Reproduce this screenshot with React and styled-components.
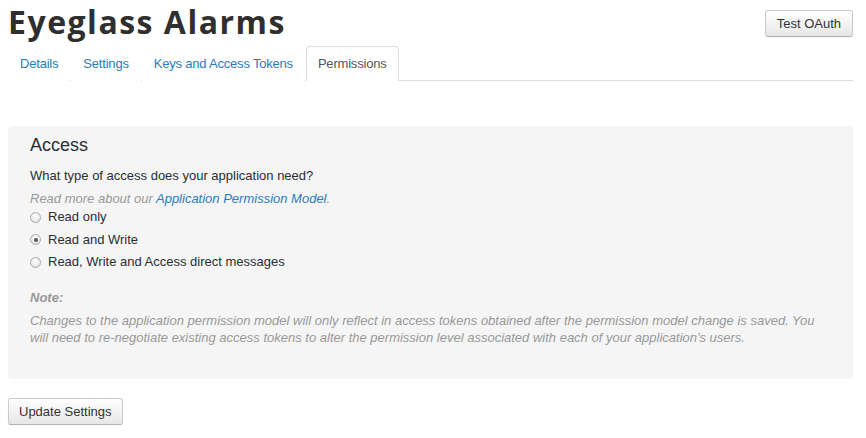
import React from "react";
import styled, { createGlobalStyle } from "styled-components";

const Global = createGlobalStyle`
  html, body { margin: 0; padding: 0; background: #fff; }
  body { font-family: "Liberation Sans", Arial, sans-serif; font-size: 13px; color: #292f33; }
  * { box-sizing: border-box; }
`;

const Page = styled.div`
  padding: 0 13px 0 8px;
`;

const Header = styled.div`
  display: flex;
  justify-content: space-between;
  align-items: flex-start;
  height: 46px;
`;

const Title = styled.h1`
  margin: 0;
  font-family: "Open Sans", Lato, sans-serif;
  font-weight: 700;
  font-size: 32px;
  line-height: 44px;
  color: #2f2f2f;
  letter-spacing: 1.5px;
`;

const Button = styled.button`
  font-family: "Liberation Sans", Arial, sans-serif;
  font-size: 13px;
  color: #333;
  height: 27px;
  padding: 0 ${p => p.$px || 11}px;
  border: 1px solid #ccc;
  border-bottom-color: #b3b3b3;
  border-radius: 3px;
  background: linear-gradient(#fff, #e6e6e6);
  box-shadow: inset 0 1px 0 rgba(255,255,255,.2), 0 1px 2px rgba(0,0,0,.05);
  margin-top: ${p => p.$mt || 0}px;
  cursor: pointer;
`;

const Tabs = styled.ul`
  display: flex;
  list-style: none;
  margin: 0;
  padding: 0;
  border-bottom: 1px solid #ddd;
`;

const Tab = styled.li`
  margin-right: 1px;
  margin-bottom: -1px;
  height: 35px;
  display: flex;
  align-items: center;
  padding: 0 11px;
  border: 1px solid ${p => (p.$active ? "#ddd" : "transparent")};
  border-bottom-color: ${p => (p.$active ? "#fff" : "transparent")};
  border-radius: 4px 4px 0 0;
  background: #fff;
  color: ${p => (p.$active ? "#555" : "#2b7bb9")};
  letter-spacing: -0.2px;
`;

const Panel = styled.div`
  margin-top: 45px;
  background: #f5f5f5;
  border-radius: 4px;
  padding: 8px 22px 0 22px;
  height: 253px;
`;

const Heading = styled.h3`
  margin: 0;
  font-size: 18px;
  font-weight: 400;
  line-height: 22px;
  color: #292f33;
`;

const Question = styled.p`
  margin: 11px 0 0;
  line-height: 18px;
`;

const Muted = styled.p`
  margin: 5px 0 0;
  line-height: 18px;
  font-style: italic;
  color: #999;
  a { color: #2b7bb9; text-decoration: none; }
`;

const Options = styled.div`
  display: flex;
  flex-direction: column;
  gap: 4.5px;
`;

const Option = styled.label`
  display: flex;
  align-items: center;
  gap: 7px;
  line-height: 18px;
  color: #292f33;
`;

const Radio = styled.span`
  width: 11px;
  height: 11px;
  border-radius: 50%;
  border: 1px solid #aaa;
  background: radial-gradient(circle at 50% 35%, #fff, #dcdcdc);
  position: relative;
  &::after {
    content: "";
    display: ${p => (p.$checked ? "block" : "none")};
    position: absolute;
    left: 2.5px;
    top: 2.5px;
    width: 4px;
    height: 4px;
    border-radius: 50%;
    background: #555;
  }
`;

const Note = styled.div`
  margin-top: 18px;
  color: #999;
  font-style: italic;
  line-height: 17px;
`;

const NoteLabel = styled.div`
  font-weight: 700;
  margin-bottom: 6px;
`;

const Footer = styled.div`
  padding-top: 19px;
`;

export default function App() {
  return (
    <>
      <Global />
      <Page>
        <Header>
          <Title>Eyeglass Alarms</Title>
          <Button $mt={10}>Test OAuth</Button>
        </Header>
        <Tabs>
          <Tab>Details</Tab>
          <Tab>Settings</Tab>
          <Tab>Keys and Access Tokens</Tab>
          <Tab $active>Permissions</Tab>
        </Tabs>
        <Panel>
          <Heading>Access</Heading>
          <Question>What type of access does your application need?</Question>
          <Muted>
            Read more about our <a href="#">Application Permission Model</a>.
          </Muted>
          <Options>
            <Option><Radio />Read only</Option>
            <Option><Radio $checked />Read and Write</Option>
            <Option><Radio />Read, Write and Access direct messages</Option>
          </Options>
          <Note>
            <NoteLabel>Note:</NoteLabel>
            Changes to the application permission model will only reflect in access tokens obtained after the permission model change is saved. You will need to re-negotiate existing access tokens to alter the permission level associated with each of your application's users.
          </Note>
        </Panel>
        <Footer>
          <Button $px={10}>Update Settings</Button>
        </Footer>
      </Page>
    </>
  );
}
